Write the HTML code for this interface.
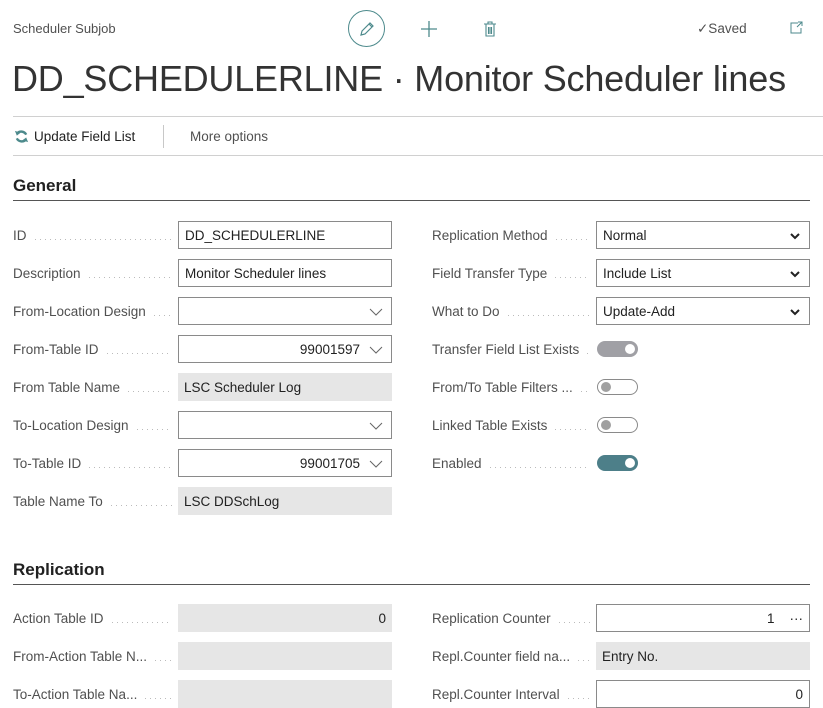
<!DOCTYPE html>
<html><head><meta charset="utf-8"><style>
*{box-sizing:border-box;margin:0;padding:0}
body{width:823px;height:691px;overflow:hidden;background:#fff;font-family:"Liberation Sans",sans-serif;color:#212121;position:relative}
.a{position:absolute}
.lbl{position:absolute;display:flex;align-items:center;font-size:13.5px;color:#505050;height:20px}
.lbl span.d{flex:1;margin:0 6px 0 8px;height:1px;position:relative;top:4px;background:repeating-linear-gradient(90deg,#bbb 0 1px,transparent 1px 5px)}
.in{position:absolute;height:28px;width:214px;border:1px solid #8a8a8a;font-size:13.5px;padding:0 6px;display:flex;align-items:center;color:#212121;background:#fff}
.ro{border:none;background:#e6e6e6}
.r{justify-content:flex-end}
.chev{position:absolute;right:8px;top:7px}
.tg{position:absolute;width:41px;height:16px;border-radius:8px}
.tg i{position:absolute;width:10px;height:10px;border-radius:5px;top:3px}
h2{position:absolute;font-size:17px;font-weight:bold;color:#212121}
.hr{position:absolute;left:13px;width:797px;height:1px;background:#555}
</style></head><body>
<div class="a" style="left:13px;top:21px;font-size:13px;color:#505050">Scheduler Subjob</div>
<div class="a" style="left:348px;top:10px;width:37px;height:37px;border:1px solid #4d8a8c;border-radius:50%"></div>
<svg class="a" style="left:358px;top:20px" width="18" height="18" viewBox="0 0 18 18"><path d="M3 15 L4 11 L12 3 L15 6 L7 14 Z M11 4 L14 7" fill="none" stroke="#4d8a8c" stroke-width="1.2"/></svg>
<svg class="a" style="left:420px;top:20px" width="18" height="18"><path d="M9 1V17M1 9H17" stroke="#4d8a8c" stroke-width="1.3"/></svg>
<svg class="a" style="left:483px;top:20px" width="14" height="18"><path d="M1 4H13M5 4V2H9V4M3 4V16H11V4M5.5 7V14M7 7V14M8.5 7V14" fill="none" stroke="#4d8a8c" stroke-width="1.1"/></svg>
<div class="a" style="left:697px;top:21px;font-size:13.5px;color:#505050">✓Saved</div>
<svg class="a" style="left:789px;top:21px" width="16" height="14"><path d="M9 2H2V12H12V7M9 1H13V5M13 1L8 6" fill="none" stroke="#4d8a8c" stroke-width="1"/></svg>
<div class="a" style="left:12px;top:58px;font-size:36px;font-weight:300;color:#333;letter-spacing:-0.2px">DD_SCHEDULERLINE · Monitor Scheduler lines</div>
<div class="a" style="left:13px;top:116px;width:810px;height:1px;background:#d0d0d0"></div>
<svg class="a" style="left:14px;top:129px" width="15" height="15" viewBox="0 0 16 16"><path d="M13 6A6 6 0 0 0 3 5M3 10A6 6 0 0 0 13 11" fill="none" stroke="#4d8a8c" stroke-width="2.6"/><path d="M1 2L3 7L7 4Z M15 14L13 9L9 12Z" fill="#4d8a8c"/></svg>
<div class="a" style="left:34px;top:129px;font-size:13.5px;color:#212121">Update Field List</div>
<div class="a" style="left:163px;top:125px;width:1px;height:23px;background:#c8c8c8"></div>
<div class="a" style="left:190px;top:129px;font-size:13.5px;color:#505050">More options</div>
<div class="a" style="left:13px;top:155px;width:810px;height:1px;background:#d0d0d0"></div>
<h2 style="left:13px;top:176px">General</h2><div class="hr" style="top:200px"></div>

<div class="lbl" style="left:13px;top:225px;width:165px">ID<span class="d"></span></div>
<div class="in" style="left:178px;top:221px">DD_SCHEDULERLINE</div>
<div class="lbl" style="left:13px;top:263px;width:165px">Description<span class="d"></span></div>
<div class="in" style="left:178px;top:259px">Monitor Scheduler lines</div>
<div class="lbl" style="left:13px;top:301px;width:165px">From-Location Design<span class="d"></span></div>
<div class="in" style="left:178px;top:297px"><svg class="chev" width="14" height="14"><path d="M1 4L7 10L13 4" fill="none" stroke="#666"/></svg></div>
<div class="lbl" style="left:13px;top:339px;width:165px">From-Table ID<span class="d"></span></div>
<div class="in r" style="left:178px;top:335px;padding-right:31px">99001597<svg class="chev" width="14" height="14"><path d="M1 4L7 10L13 4" fill="none" stroke="#666"/></svg></div>
<div class="lbl" style="left:13px;top:377px;width:165px">From Table Name<span class="d"></span></div>
<div class="in ro" style="left:178px;top:373px">LSC Scheduler Log</div>
<div class="lbl" style="left:13px;top:415px;width:165px">To-Location Design<span class="d"></span></div>
<div class="in" style="left:178px;top:411px"><svg class="chev" width="14" height="14"><path d="M1 4L7 10L13 4" fill="none" stroke="#666"/></svg></div>
<div class="lbl" style="left:13px;top:453px;width:165px">To-Table ID<span class="d"></span></div>
<div class="in r" style="left:178px;top:449px;padding-right:31px">99001705<svg class="chev" width="14" height="14"><path d="M1 4L7 10L13 4" fill="none" stroke="#666"/></svg></div>
<div class="lbl" style="left:13px;top:491px;width:165px">Table Name To<span class="d"></span></div>
<div class="in ro" style="left:178px;top:487px">LSC DDSchLog</div>

<div class="lbl" style="left:432px;top:225px;width:164px">Replication Method<span class="d"></span></div>
<div class="in" style="left:596px;top:221px">Normal<svg class="chev" width="12" height="14"><path d="M2 5L6 9L10 5" fill="none" stroke="#222" stroke-width="2"/></svg></div>
<div class="lbl" style="left:432px;top:263px;width:164px">Field Transfer Type<span class="d"></span></div>
<div class="in" style="left:596px;top:259px">Include List<svg class="chev" width="12" height="14"><path d="M2 5L6 9L10 5" fill="none" stroke="#222" stroke-width="2"/></svg></div>
<div class="lbl" style="left:432px;top:301px;width:164px">What to Do<span class="d"></span></div>
<div class="in" style="left:596px;top:297px">Update-Add<svg class="chev" width="12" height="14"><path d="M2 5L6 9L10 5" fill="none" stroke="#222" stroke-width="2"/></svg></div>
<div class="lbl" style="left:432px;top:339px;width:164px">Transfer Field List Exists<span class="d"></span></div>
<div class="tg" style="left:597px;top:341px;background:#a0a0a5"><i style="right:3px;background:#fff"></i></div>
<div class="lbl" style="left:432px;top:377px;width:164px">From/To Table Filters ...<span class="d"></span></div>
<div class="tg" style="left:597px;top:379px;border:1px solid #8a8a8a"><i style="left:3px;top:2px;background:#a0a0a0"></i></div>
<div class="lbl" style="left:432px;top:415px;width:164px">Linked Table Exists<span class="d"></span></div>
<div class="tg" style="left:597px;top:417px;border:1px solid #8a8a8a"><i style="left:3px;top:2px;background:#a0a0a0"></i></div>
<div class="lbl" style="left:432px;top:453px;width:164px">Enabled<span class="d"></span></div>
<div class="tg" style="left:597px;top:455px;background:#4d7f89"><i style="right:3px;background:#fff"></i></div>

<h2 style="left:13px;top:560px">Replication</h2><div class="hr" style="top:584px"></div>
<div class="lbl" style="left:13px;top:608px;width:165px">Action Table ID<span class="d"></span></div>
<div class="in ro r" style="left:178px;top:604px">0</div>
<div class="lbl" style="left:13px;top:646px;width:165px">From-Action Table N...<span class="d"></span></div>
<div class="in ro" style="left:178px;top:642px"></div>
<div class="lbl" style="left:13px;top:684px;width:165px">To-Action Table Na...<span class="d"></span></div>
<div class="in ro" style="left:178px;top:680px"></div>
<div class="lbl" style="left:432px;top:608px;width:164px">Replication Counter<span class="d"></span></div>
<div class="in r" style="left:596px;top:604px">1&nbsp;&nbsp;&nbsp;&nbsp;···</div>
<div class="lbl" style="left:432px;top:646px;width:164px">Repl.Counter field na...<span class="d"></span></div>
<div class="in ro" style="left:596px;top:642px">Entry No.</div>
<div class="lbl" style="left:432px;top:684px;width:164px">Repl.Counter Interval<span class="d"></span></div>
<div class="in r" style="left:596px;top:680px">0</div>
</body></html>
